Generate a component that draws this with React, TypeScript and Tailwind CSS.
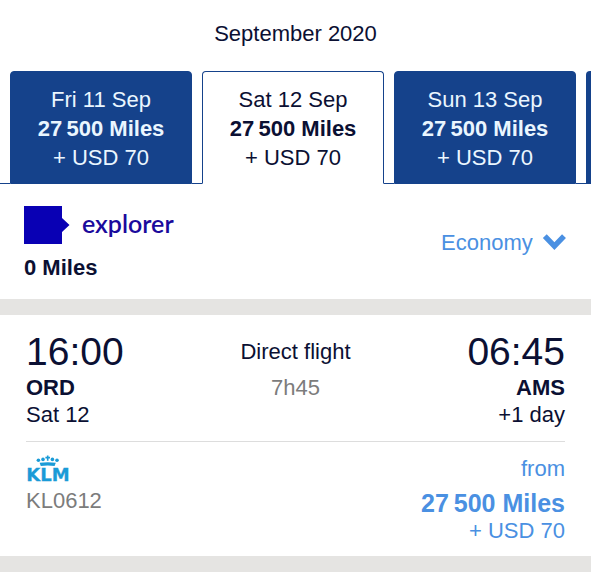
import React, { useState } from "react";

const days = [
  { id: "fri-11", label: "Fri 11 Sep" },
  { id: "sat-12", label: "Sat 12 Sep" },
  { id: "sun-13", label: "Sun 13 Sep" },
];

const miles = "27\u2009500 Miles";
const taxes = "+ USD 70";

const ExplorerLogo: React.FC = () => (
  <svg width="46" height="38" viewBox="0 0 46 38" aria-hidden="true">
    <path d="M0 0H38V12L45.5 19L38 26V38H0Z" fill="#0900b4" />
  </svg>
);

const KlmLogo: React.FC = () => (
  <svg
    width="46"
    height="26"
    viewBox="0 0 46 26"
    className="overflow-visible"
    role="img"
    aria-label="KLM"
  >
    <g fill="#1a9bd7">
      {/* Crown */}
      <circle cx="12.4" cy="3.2" r="1.8" />
      <circle cx="17" cy="2.4" r="1.8" />
      <circle cx="26.4" cy="2.4" r="1.8" />
      <circle cx="31" cy="3.2" r="1.8" />
      <path d="M20.9 -1.6h1.6v1.4h1.5v1.6h-1.5v2.4h-1.6v-2.4h-1.5v-1.6h1.5z" />
      <path d="M13.6 5.8Q21.7 4.6 29.8 5.8L28.6 9Q21.7 8 14.8 9Z" />
      <text
        x="22"
        y="24"
        textAnchor="middle"
        stroke="#1a9bd7"
        strokeWidth="0.3"
        className="font-['DejaVu_Sans',sans-serif] text-[18px] font-bold"
      >
        KLM
      </text>
    </g>
  </svg>
);

const App: React.FC = () => {
  const [selected, setSelected] = useState("sat-12");

  return (
    <main className="bg-white font-['Liberation_Sans',Arial,sans-serif] text-[22px] leading-[29px] text-[#0b1033]">
      <h1 className="pt-[19px] text-center">September 2020</h1>

      {/* Day tabs */}
      <div className="mt-[23px] flex overflow-hidden">
        <div className="w-[10px] shrink-0 border-b border-[#15428b]" />
        {days.map((day) => (
          <React.Fragment key={day.id}>
            <button
              type="button"
              onClick={() => setSelected(day.id)}
              className={`w-[182px] shrink-0 rounded-t border border-[#15428b] pt-[13px] pb-[11px] ${
                selected === day.id
                  ? "border-b-transparent bg-white"
                  : "bg-[#15428b] text-[#eaf6ff]"
              }`}
            >
              <span className="block">{day.label}</span>
              <span className="block font-bold">{miles}</span>
              <span className="block">{taxes}</span>
            </button>
            <div className="w-[10px] shrink-0 border-b border-[#15428b]" />
          </React.Fragment>
        ))}
        <button
          type="button"
          aria-label="Later dates"
          className="min-w-0 flex-1 rounded-tl bg-[#15428b]"
        />
      </div>

      {/* Balance and cabin */}
      <section className="flex items-start justify-between px-6 pt-[22px] pb-[17px]">
        <div>
          <div className="flex items-center gap-3">
            <ExplorerLogo />
            <span className="pb-1 font-['Lato',sans-serif] text-[25px] font-semibold text-[#1a0a9c]">
              explorer
            </span>
          </div>
          <p className="mt-[9px] font-bold">0 Miles</p>
        </div>
        <div className="relative mt-[22px] flex items-center text-[#4a90e2]">
          <select
            aria-label="Cabin"
            className="appearance-none bg-transparent pr-[34px]"
          >
            <option>Economy</option>
            <option>Business</option>
          </select>
          <svg
            className="pointer-events-none absolute right-0 overflow-visible"
            width="26"
            height="18"
            viewBox="0 0 26 18"
            aria-hidden="true"
          >
            <path
              d="M3.8 2.2L13.4 12.2L23 2.2"
              fill="none"
              stroke="#4a90e2"
              strokeWidth="5.4"
            />
          </svg>
        </div>
      </section>

      <div className="h-4 bg-[#e5e4e2]" />

      {/* Flight */}
      <section className="px-[26px] pt-[15px] pb-3 leading-[27px]">
        <div className="flex justify-between">
          <div>
            <p className="text-[39px] leading-[44px]">16:00</p>
            <p className="font-bold">ORD</p>
            <p>Sat 12</p>
          </div>
          <div className="pt-2 text-center">
            <p>Direct flight</p>
            <p className="mt-[9px] text-[#7c7c7c]">7h45</p>
          </div>
          <div className="text-right">
            <p className="text-[39px] leading-[44px]">06:45</p>
            <p className="font-bold">AMS</p>
            <p>+1 day</p>
          </div>
        </div>
        <div className="mt-[13px] flex justify-between border-t border-[#dddddd] pt-[13px]">
          <div className="pt-0.5">
            <KlmLogo />
            <p className="mt-1 text-[#7c7c7c]">KL0612</p>
          </div>
          <div className="text-right text-[#4a90e2]">
            <p>from</p>
            <p className="mt-2 text-[25px] font-bold">{miles}</p>
            <p>{taxes}</p>
          </div>
        </div>
      </section>

      <div className="h-4 bg-[#e5e4e2]" />
    </main>
  );
};

export default App;
